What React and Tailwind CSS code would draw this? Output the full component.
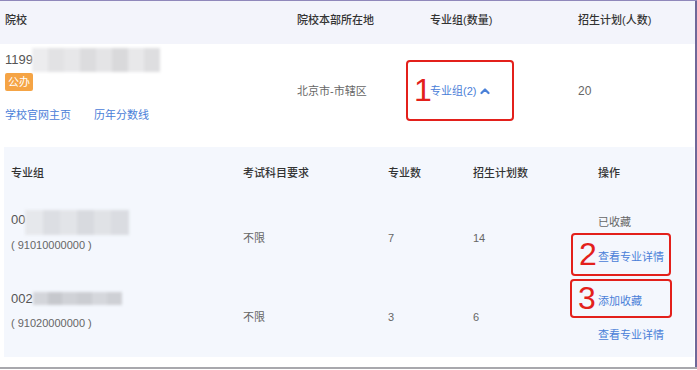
import React from "react";

const font = { fontFamily: '"Liberation Sans", "Noto Sans CJK SC", sans-serif' };

function Blur({ className, shades }) {
  return (
    <div className={`flex blur-[1.5px] ${className}`}>
      {shades.map((c, i) => (
        <div key={i} className="flex-1 h-full" style={{ background: c }} />
      ))}
    </div>
  );
}

function ChevronUp() {
  return (
    <svg width="10" height="8" viewBox="0 0 10 8" className="ml-[4px]">
      <polyline points="1.5,6 5,2.5 8.5,6" fill="none" stroke="#4a80d8" strokeWidth="2.2" strokeLinecap="round" strokeLinejoin="round" />
    </svg>
  );
}

function Mark({ n, className }) {
  return (
    <div className={`absolute border-2 border-[#e3201b] rounded-[4px] pointer-events-none ${className}`}>
      <span className="absolute left-[6px] top-1/2 -translate-y-1/2 text-[32px] leading-none text-[#e3201b]" style={{ fontFamily: '"Liberation Sans", sans-serif' }}>
        {n}
      </span>
    </div>
  );
}

function GroupRow({ height, prefix, blur, code, subjects, count, plan, actions }) {
  return (
    <div className={`flex items-center text-[11px] text-[#666] ${height}`}>
      <div className="w-[239px] pl-[7px] pb-[13px] flex flex-col gap-[8px]">
        <div className="flex items-center h-[18px]">
          <span className="text-[13px] text-[#555]">{prefix}</span>
          {blur}
        </div>
        <div>( {code} )</div>
      </div>
      <div className="w-[145px]">{subjects}</div>
      <div className="w-[85px]">{count}</div>
      <div className="w-[125px]">{plan}</div>
      <div className="flex-1 flex flex-col gap-[18px] pt-[2px]">{actions}</div>
    </div>
  );
}

export default function App() {
  return (
    <div className="relative w-[697px] h-[370px] bg-white overflow-hidden border-t border-[#9088bb]" style={font}>
      <div className="absolute right-0 top-0 bottom-[2px] w-[2px] bg-[#6f6899]" />

      <div className="flex items-center h-[43px] px-[5px] pb-[4px] bg-[#f3f4fb] text-[11px] font-medium text-[#333]">
        <div className="w-[292px]">院校</div>
        <div className="w-[133px]">院校本部所在地</div>
        <div className="w-[148px]">专业组(数量)</div>
        <div>招生计划(人数)</div>
      </div>

      <div className="flex items-center h-[94px] px-[5px] text-[11px] text-[#666]">
        <div className="w-[292px] self-stretch flex flex-col pt-[4px]">
          <div className="flex items-center h-[24px]">
            <span className="text-[13px] text-[#555]">1199</span>
            <Blur className="w-[128px] h-[24px] -ml-[1px]" shades={["#ececee", "#e2e2e4", "#e7e7e9", "#dcdcde", "#e4e4e6", "#d9d9db", "#e8e8ea", "#dedee0"]} />
          </div>
          <div className="mt-[1px] w-[28px] h-[18px] rounded-[2px] bg-[#f5a445] text-white text-[11px] flex items-center justify-center">公办</div>
          <div className="mt-[16px] flex gap-[23px] leading-[16px] text-[#4a80d8]">
            <span>学校官网主页</span>
            <span>历年分数线</span>
          </div>
        </div>
        <div className="w-[133px]">北京市-市辖区</div>
        <div className="w-[148px]">
          <span className="relative inline-flex items-center text-[#4a80d8]">
            专业组(2)
            <ChevronUp />
            <Mark n="1" className="-left-[24px] -top-[23px] w-[108px] h-[61px]" />
          </span>
        </div>
        <div className="text-[12px]">20</div>
      </div>

      <div className="h-[9px] bg-white" />

      <div className="h-[210px] ml-[4px] mr-[3px] bg-[#f4f7fd]">
        <div className="flex items-center h-[53px] text-[11px] font-medium text-[#333]">
          <div className="w-[239px] pl-[7px]">专业组</div>
          <div className="w-[145px]">考试科目要求</div>
          <div className="w-[85px]">专业数</div>
          <div className="w-[125px]">招生计划数</div>
          <div>操作</div>
        </div>
        <GroupRow
          height="h-[77px]"
          prefix="00"
          blur={<Blur className="w-[103px] h-[25px] mt-[6px]" shades={["#e6e8ec", "#dcdee3", "#e2e4e8", "#d8dadf", "#e0e2e6", "#dadce1"]} />}
          code="91010000000"
          subjects="不限"
          count="7"
          plan="14"
          actions={[
            <span key="a" className="text-[#666]">已收藏</span>,
            <span key="b" className="relative self-start text-[#4a80d8]">
              查看专业详情
              <Mark n="2" className="-left-[27px] -top-[16px] w-[100px] h-[43px]" />
            </span>,
          ]}
        />
        <GroupRow
          height="h-[80px]"
          prefix="002"
          blur={<Blur className="w-[89px] h-[13px]" shades={["#d3d5da", "#c6c8cd", "#d0d2d7", "#cbcdd2", "#d5d7dc", "#ced0d5"]} />}
          code="91020000000"
          subjects="不限"
          count="3"
          plan="6"
          actions={[
            <span key="a" className="relative self-start text-[#4a80d8]">
              添加收藏
              <Mark n="3" className="-left-[28px] -top-[14px] w-[102px] h-[39px]" />
            </span>,
            <span key="b" className="text-[#4a80d8]">查看专业详情</span>,
          ]}
        />
      </div>

      <div className="absolute left-0 right-0 bottom-[1px] h-[2px] bg-[#a8a8ad]" />
    </div>
  );
}
